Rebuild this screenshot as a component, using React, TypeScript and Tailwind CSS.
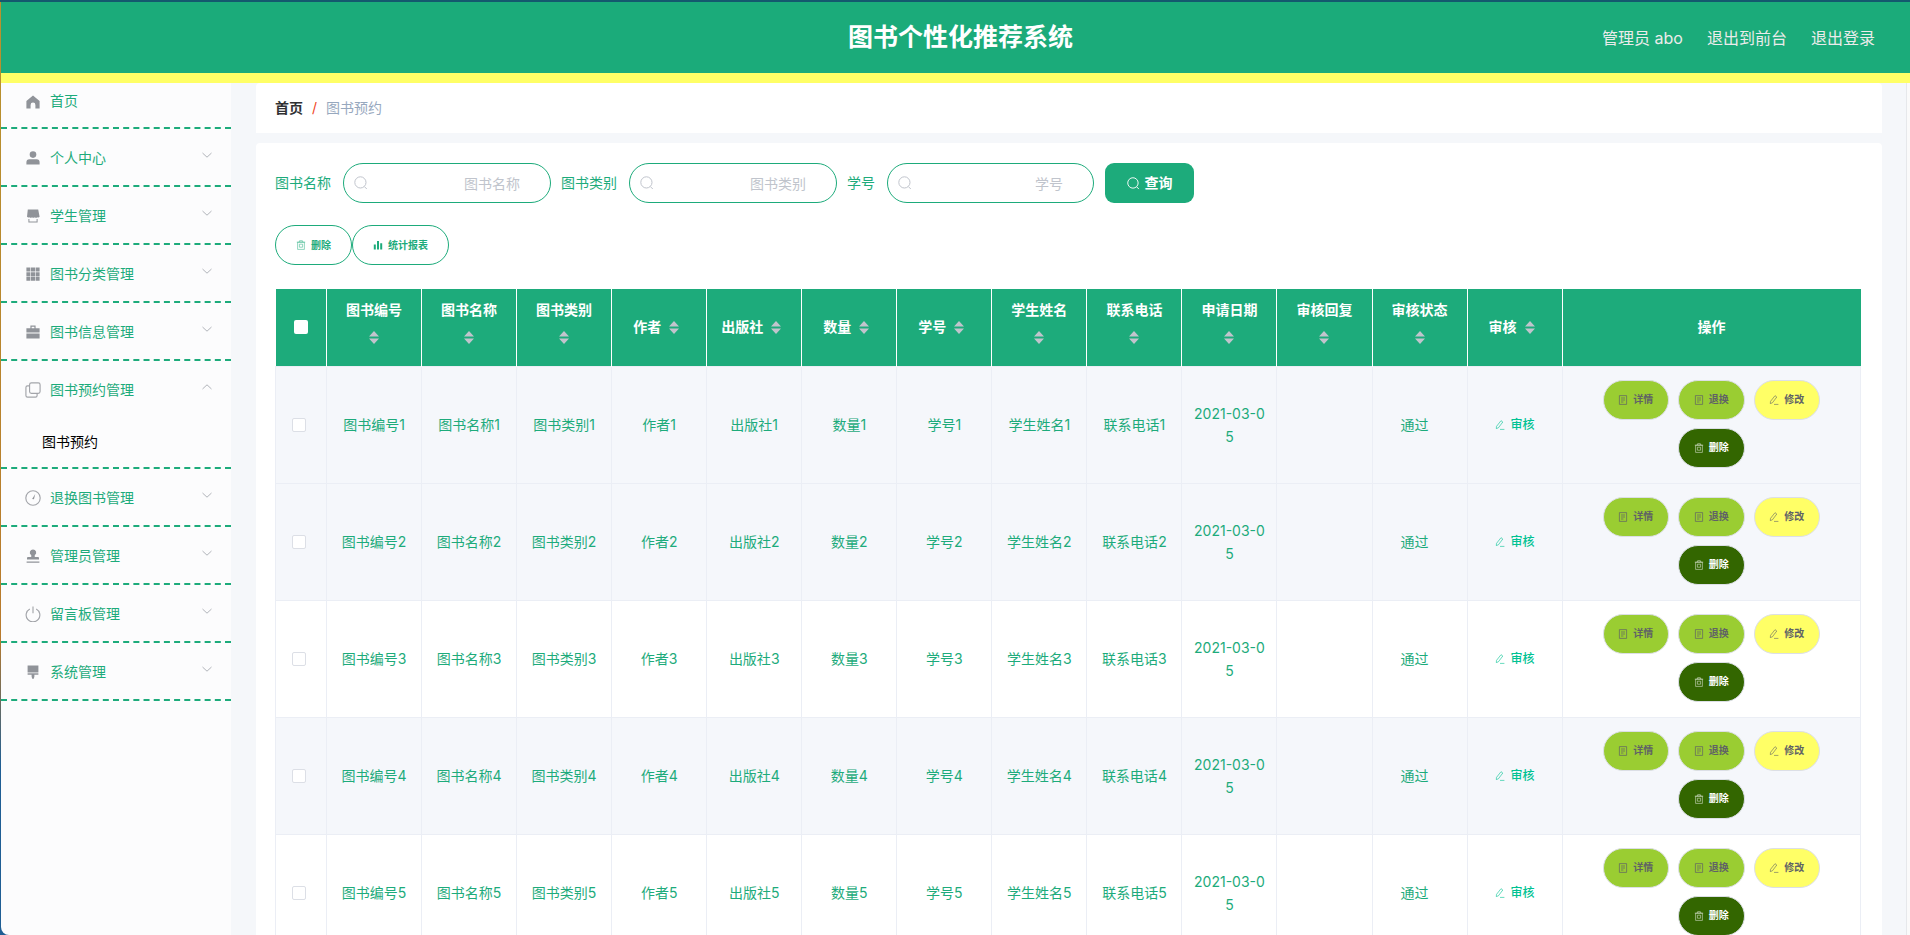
import React from 'react';

const rows = [1, 2, 3, 4, 5];

const menus = ['个人中心', '学生管理', '图书分类管理', '图书信息管理', '图书预约管理', '退换图书管理', '管理员管理', '留言板管理', '系统管理'];

const headers = [
  { label: '图书编号', wrap: true },
  { label: '图书名称', wrap: true },
  { label: '图书类别', wrap: true },
  { label: '作者', wrap: false },
  { label: '出版社', wrap: false },
  { label: '数量', wrap: false },
  { label: '学号', wrap: false },
  { label: '学生姓名', wrap: true },
  { label: '联系电话', wrap: true },
  { label: '申请日期', wrap: true },
  { label: '审核回复', wrap: true },
  { label: '审核状态', wrap: true },
  { label: '审核', wrap: false },
];

const MenuIcon: React.FC<{ name: string }> = ({ name }) => {
  const stroke = { fill: 'none', stroke: '#a3a5aa', strokeWidth: 1 };
  const outlined = ['图书预约管理', '退换图书管理', '留言板管理'].includes(name);
  return (
    <svg
      viewBox="0 0 14 14"
      className={`shrink-0 fill-[#909399] ${outlined ? 'w-[16px] h-[16px] -mx-[1px]' : 'w-[14px] h-[14px]'}`}
    >
      {name === '首页' && <path d="M7 .6 13.6 6v7.4H9.4V10a2.4 2.4 0 0 0-4.8 0v3.4H.4V6z" />}
      {name === '个人中心' && (
        <>
          <circle cx="7" cy="3.6" r="3.3" />
          <path d="M.4 13.6v-2.4A3 3 0 0 1 3.4 8.2h7.2a3 3 0 0 1 3 3v2.4z" />
        </>
      )}
      {name === '学生管理' && (
        <>
          <path d="M1.8.6h10.4l1.4 7.2q-1 1.2-2.2.4-1.3 1-2.6 0-1.4 1-2.8 0-1.3 1-2.6 0-1.2.8-2.4-.4z" />
          <path d="M2.4 10v3.6h9.2V10h-1v2.4H3.4V10z" />
        </>
      )}
      {name === '图书分类管理' && (
        <path d="M.4.6h4v4h-4zM5 .6h4v4H5zM9.6.6h4v4h-4zM.4 5.2h4v4h-4zM5 5.2h4v4H5zM9.6 5.2h4v4h-4zM.4 9.8h4v4h-4zM5 9.8h4v4H5zM9.6 9.8h4v4h-4z" />
      )}
      {name === '图书信息管理' && (
        <path d="M4.4.6h5.2v2.6h4v4.2H.4V3.2h4zM5.6 1.8v1.4h2.8V1.8zM.4 8.6h13.2v5H.4z" />
      )}
      {name === '图书预约管理' && (
        <g {...stroke}>
          <rect x="4" y=".8" width="9.2" height="9.2" rx="1.6" />
          <path d="M4 3.4H2.2A1.4 1.4 0 0 0 .8 4.8v7a1.4 1.4 0 0 0 1.4 1.4h7a1.4 1.4 0 0 0 1.4-1.4V10" />
        </g>
      )}
      {name === '退换图书管理' && (
        <>
          <circle cx="7" cy="7" r="6.3" {...stroke} />
          <path d="M9 3.6 7.8 8.2 6.2 7.8z" />
        </>
      )}
      {name === '管理员管理' && (
        <path d="M7 .4a3.2 3.2 0 0 1 2 5.7c-.5.5-.5 1.6 0 2h3a1 1 0 0 1 1 1v1.4H1V9.100a1 1 0 0 1 1-1h3c.5-.4.5-1.500 0-2A3.200 3.200 0 0 1 7 .4zM.6 12.400h12.800v1.400H.6z" />
      )}
      {name === '留言板管理' && (
        <g {...stroke}>
          <path d="M4.2 2.6a6 6 0 1 0 5.6 0" />
          <path d="M7 .4v6" />
        </g>
      )}
      {name === '系统管理' && <path d="M1.6.4h10.8v7H1.6zM1.6 8.2h10.8v1.6H8.4v1.6L7.8 13.8H6.2l-.6-2.4V9.8H1.6z" />}
    </svg>
  );
};

const SearchIcon: React.FC<{ className: string }> = ({ className }) => (
  <svg viewBox="0 0 14 14" fill="none" stroke="currentColor" strokeWidth="1" className={className}>
    <circle cx="6.4" cy="6.4" r="5.6" />
    <path d="M10.4 10.6 12.8 13" />
  </svg>
);

const TicketIcon = () => (
  <svg viewBox="0 0 10 10" fill="none" stroke="currentColor" strokeWidth=".7" className="w-[10px] h-[10px] shrink-0">
    <path d="M1.4.6h7.2v8.8H1.4zM3 3h4M3 5h4M3 7h2.4" />
  </svg>
);

const PencilIcon = () => (
  <svg viewBox="0 0 10 10" fill="none" stroke="currentColor" strokeWidth=".6" className="w-[10px] h-[10px] shrink-0">
    <path d="M6 .7 7.8 2 3.4 7.8l-2.1.8.2-2.2zM5 9.4h4.4" />
  </svg>
);

const TrashIcon = () => (
  <svg viewBox="0 0 10 10" fill="none" stroke="currentColor" strokeWidth=".6" className="w-[10px] h-[10px] shrink-0 opacity-80">
    <path d="M1.6 2.2h6.8v7.2H1.6zM.8 2.2h8.4M3.6 2V.7h2.8V2M3.4 4.2h3.2v3H3.4z" />
  </svg>
);

const ChartIcon = () => (
  <svg viewBox="0 0 10 10" className="w-[10px] h-[10px] shrink-0 fill-current">
    <path d="M.8 4.4h2v5h-2zM4 1h2v8.4H4zM7.2 3.2h2v6.2h-2z" />
  </svg>
);

const Caret = () => (
  <svg viewBox="0 0 10 13" className="w-[10px] h-[13px] shrink-0 fill-[#c0c4cc]">
    <path d="M5 0 10 5.5H0zM0 7.5H10L5 13z" />
  </svg>
);

const SearchField: React.FC<{ label: string; width: string }> = ({ label, width }) => (
  <div className="flex items-center">
    <span className="text-sm text-[#1dab7b] mr-[12px]">{label}</span>
    <div className={`relative h-10 ${width}`}>
      <SearchIcon className="absolute left-[11px] top-[13px] w-[14px] h-[14px] text-[#c0c4cc]" />
      <input
        placeholder={label}
        className="w-full h-full rounded-[20px] border border-[#1dab7b] bg-white pl-[30px] pr-[30px] text-right text-sm outline-none placeholder:text-[#c0c4cc]"
      />
    </div>
  </div>
);

const ActionButton: React.FC<{ label: string; color: string; icon: React.ReactNode }> = ({ label, color, icon }) => (
  <button className={`flex items-center justify-center gap-[5px] w-[66.5px] h-10 rounded-[20px] border border-[#dcdfe6] text-[10px] font-bold ${color}`}>
    {icon}
    {label}
  </button>
);

export default function App() {
  return (
    <div className="h-[935px] overflow-hidden flex flex-col bg-[linear-gradient(to_bottom,#b8932e_0%,#b87a2c_68%,#1f5e94_82%,#1f5e94_100%)] [font-family:Inter,'Noto_Sans_CJK_SC',sans-serif]">
      <div className="h-[2px] bg-[#14586e] shrink-0" />
      <div className="flex-1 flex flex-col pl-[1px] min-h-0">
        <header className="h-[71px] shrink-0 flex items-center bg-[#1bab7a] text-white">
          <h1 className="ml-[847px] text-[25px] font-bold">图书个性化推荐系统</h1>
          <div className="ml-auto pr-[35px] flex gap-[24px] text-base text-[#ebebeb]">
            <span>管理员 abo</span>
            <span>退出到前台</span>
            <span>退出登录</span>
          </div>
        </header>
        <div className="h-[10px] shrink-0 bg-[#ffff66]" />

        <div className="flex-1 flex min-h-0">
          <aside className="w-[230px] shrink-0 bg-[#fcfcfd] rounded-bl-[8px] text-sm text-[#1dab7b]">
            <div className="h-[46px] pt-[8px] pl-[25px] flex items-start gap-[10px] border-b-2 border-dashed border-[#1dab7b]">
              <span className="mt-[4px]"><MenuIcon name="首页" /></span>
              <span>首页</span>
            </div>
            {menus.map(name => (
              <div key={name} className="border-b-2 border-dashed border-[#1dab7b]">
                <div className="h-[56px] pt-[2px] pl-[25px] pr-[15px] flex items-center gap-[10px]">
                  <MenuIcon name={name} />
                  <span>{name}</span>
                  <svg
                    viewBox="0 0 18 18"
                    fill="none"
                    stroke="#a8abb2"
                    strokeWidth=".9"
                    className="w-[18px] h-[18px] ml-auto -mt-[7px]"
                  >
                    <path d={name === '图书预约管理' ? 'M4.5 11 9 6.8 13.5 11' : 'M4.5 7 9 11.2 13.5 7'} />
                  </svg>
                </div>
                {name === '图书预约管理' && (
                  <div className="h-[50px] pl-[41px] flex items-center text-black">图书预约</div>
                )}
              </div>
            ))}
          </aside>

          <main className="flex-1 min-w-0 flex bg-[#f5f7fa]">
            <div className="flex-1 min-w-0 pl-[25px] pr-[24px]">
              <nav className="h-[50px] rounded-t-[4px] bg-white pl-[19px] flex items-center text-sm">
                <span className="font-bold text-[#303133]">首页</span>
                <span className="mx-[9px] text-[#f0441c]">/</span>
                <span className="text-[#97a8be]">图书预约</span>
              </nav>

              <section className="mt-[10px] h-[800px] rounded-t-[4px] bg-white pt-[20px] pl-[19px]">
                <div className="flex items-center gap-[10px]">
                  <SearchField label="图书名称" width="w-[208px]" />
                  <SearchField label="图书类别" width="w-[208px]" />
                  <SearchField label="学号" width="w-[207px]" />
                  <button className="ml-[1px] flex items-center justify-center gap-[5px] w-[89px] h-10 rounded-[9px] bg-[#1dab7b] text-white text-sm font-bold">
                    <SearchIcon className="w-[13px] h-[13px]" />
                    查询
                  </button>
                </div>

                <div className="flex mt-[22px] text-[10px] font-bold text-[#1dab7b]">
                  <button className="flex items-center justify-center gap-[5px] w-[77px] h-10 rounded-[20px] border border-[#1dab7b]">
                    <TrashIcon />
                    删除
                  </button>
                  <button className="flex items-center justify-center gap-[5px] w-[97px] h-10 rounded-[20px] border border-[#1dab7b]">
                    <ChartIcon />
                    统计报表
                  </button>
                </div>

                <table className="mt-[24px] w-[1586px] table-fixed border-collapse text-sm">
                  <thead>
                    <tr className="h-[77px] bg-[#1dab7b] text-white">
                      <th className="w-[51px] border-r border-white p-0 text-left">
                        <span className="block ml-[18px] w-[14px] h-[14px] rounded-[2px] bg-white" />
                      </th>
                      {headers.map(h => (
                        <th key={h.label} className="w-[95.05px] border-r border-white p-0 font-bold">
                          {h.wrap ? (
                            <div className="flex flex-col items-center pb-[12px] gap-[10px] leading-[23px]">
                              {h.label}
                              <Caret />
                            </div>
                          ) : (
                            <div className="flex items-center justify-center gap-[8px] pr-[6px]">
                              {h.label}
                              <Caret />
                            </div>
                          )}
                        </th>
                      ))}
                      <th className="p-0 font-bold">操作</th>
                    </tr>
                  </thead>
                  <tbody className="text-[#1dab7b] text-center">
                    {rows.map(n => (
                      <tr key={n} className={`h-[117px] ${n === 3 || n === 5 ? 'bg-white' : 'bg-[#f5f7fb]'}`}>
                        <td className="border border-[#ebeef5] p-0">
                          <span className="block ml-[16px] w-[14px] h-[14px] rounded-[2px] border border-[#dcdfe6] bg-white" />
                        </td>
                        <td className="border border-[#ebeef5] p-0">图书编号{n}</td>
                        <td className="border border-[#ebeef5] p-0">图书名称{n}</td>
                        <td className="border border-[#ebeef5] p-0">图书类别{n}</td>
                        <td className="border border-[#ebeef5] p-0">作者{n}</td>
                        <td className="border border-[#ebeef5] p-0">出版社{n}</td>
                        <td className="border border-[#ebeef5] p-0">数量{n}</td>
                        <td className="border border-[#ebeef5] p-0">学号{n}</td>
                        <td className="border border-[#ebeef5] p-0">学生姓名{n}</td>
                        <td className="border border-[#ebeef5] p-0">联系电话{n}</td>
                        <td className="border border-[#ebeef5] px-[10px] py-0 leading-[23px] break-all">2021-03-05</td>
                        <td className="border border-[#ebeef5] p-0" />
                        <td className="border border-[#ebeef5] p-0 pr-[10px]">通过</td>
                        <td className="border border-[#ebeef5] p-0">
                          <span className="flex items-center justify-center gap-[6px] text-xs font-medium text-[#00c292]">
                            <PencilIcon />
                            审核
                          </span>
                        </td>
                        <td className="border border-[#ebeef5] p-0 align-top pt-[13px]">
                          <div className="w-[240px] mx-auto flex flex-wrap justify-center gap-x-[9px] gap-y-[8px]">
                            <ActionButton label="详情" color="bg-[#9acd32] text-[#606266]" icon={<TicketIcon />} />
                            <ActionButton label="退换" color="bg-[#9acd32] text-[#606266]" icon={<TicketIcon />} />
                            <ActionButton label="修改" color="bg-[#ffff66] text-[#606266]" icon={<PencilIcon />} />
                            <ActionButton label="删除" color="bg-[#336600] text-white" icon={<TrashIcon />} />
                          </div>
                        </td>
                      </tr>
                    ))}
                  </tbody>
                </table>
              </section>
            </div>
            <div className="w-[4px] shrink-0 border-l border-[#e6e8eb] bg-[#fafafa]" />
          </main>
        </div>
      </div>
    </div>
  );
}
